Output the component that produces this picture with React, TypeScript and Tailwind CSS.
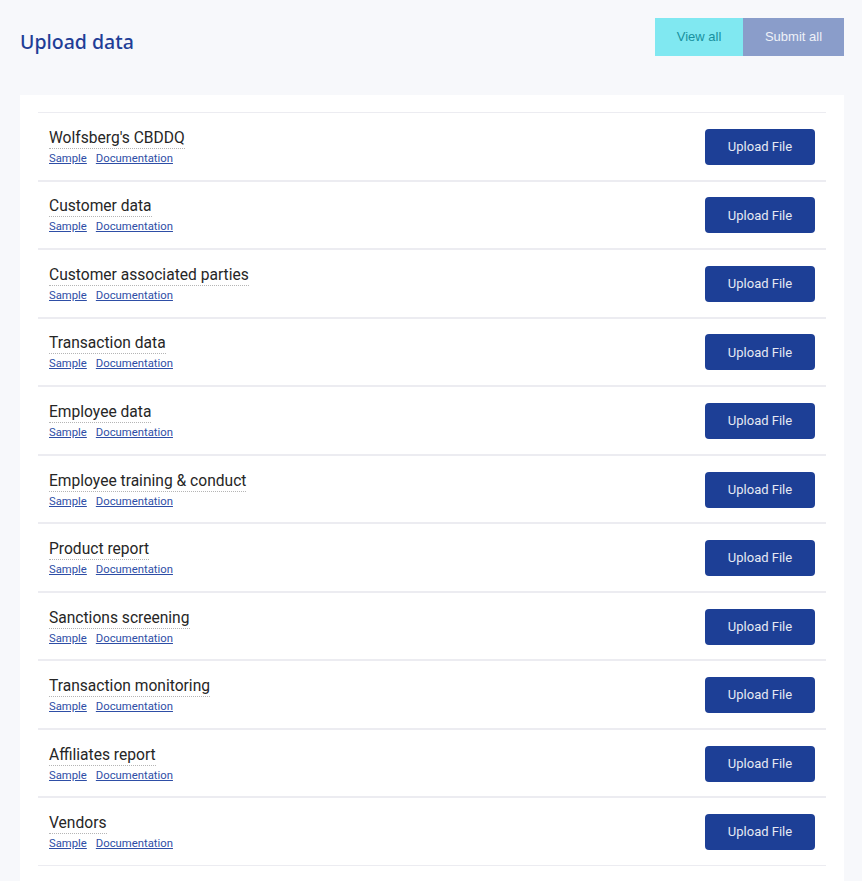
const items = [
  "Wolfsberg's CBDDQ",
  "Customer data",
  "Customer associated parties",
  "Transaction data",
  "Employee data",
  "Employee training & conduct",
  "Product report",
  "Sanctions screening",
  "Transaction monitoring",
  "Affiliates report",
  "Vendors",
];

function UploadRow({ title }: { title: string }) {
  return (
    <div className="flex h-[68.55px] items-center justify-between border-y border-[#ececf1] px-[11px] pt-[1px]">
      <div className="flex flex-col pt-[1px]">
        <span className="self-start border-b border-dotted border-[#b5b5b5] text-[15.6px] leading-[19px] text-[#262626]">
          {title}
        </span>
        <div className="mt-[3px] flex gap-[9px] text-[11.3px] leading-[14px] text-[#2e4ea6]">
          <a href="#" className="underline">Sample</a>
          <a href="#" className="underline">Documentation</a>
        </div>
      </div>
      <button className="h-[36px] w-[110px] rounded-[4px] bg-[#1d3f96] text-[13px] text-[#e6e9f3]">
        Upload File
      </button>
    </div>
  );
}

export default function App() {
  return (
    <div
      className="min-h-[881px] bg-[#f7f8fb] pl-[20px] pr-[18px] pt-[18px]"
      style={{ fontFamily: "Roboto, 'Noto Sans', sans-serif" }}
    >
      <div className="flex items-start justify-between">
        <h1
          className="mt-[11px] text-[19.5px] leading-[26px] font-medium text-[#1f3e97]"
          style={{ fontFamily: "'Noto Sans', sans-serif" }}
        >
          Upload data
        </h1>
        <div className="flex" style={{ fontFamily: "'Liberation Sans', Arial, sans-serif" }}>
          <button className="h-[38px] w-[88px] bg-[#80e8f1] text-[13px] text-[#18919f]">View all</button>
          <button className="h-[38px] w-[101px] bg-[#8a9dca] text-[13px] text-[#eef1f8]">Submit all</button>
        </div>
      </div>
      <div className="mt-[39px] bg-white px-[18px] pt-[17px] pb-[30px]">
        <div className="flex flex-col">
          {items.map((t) => (
            <UploadRow key={t} title={t} />
          ))}
        </div>
      </div>
    </div>
  );
}
